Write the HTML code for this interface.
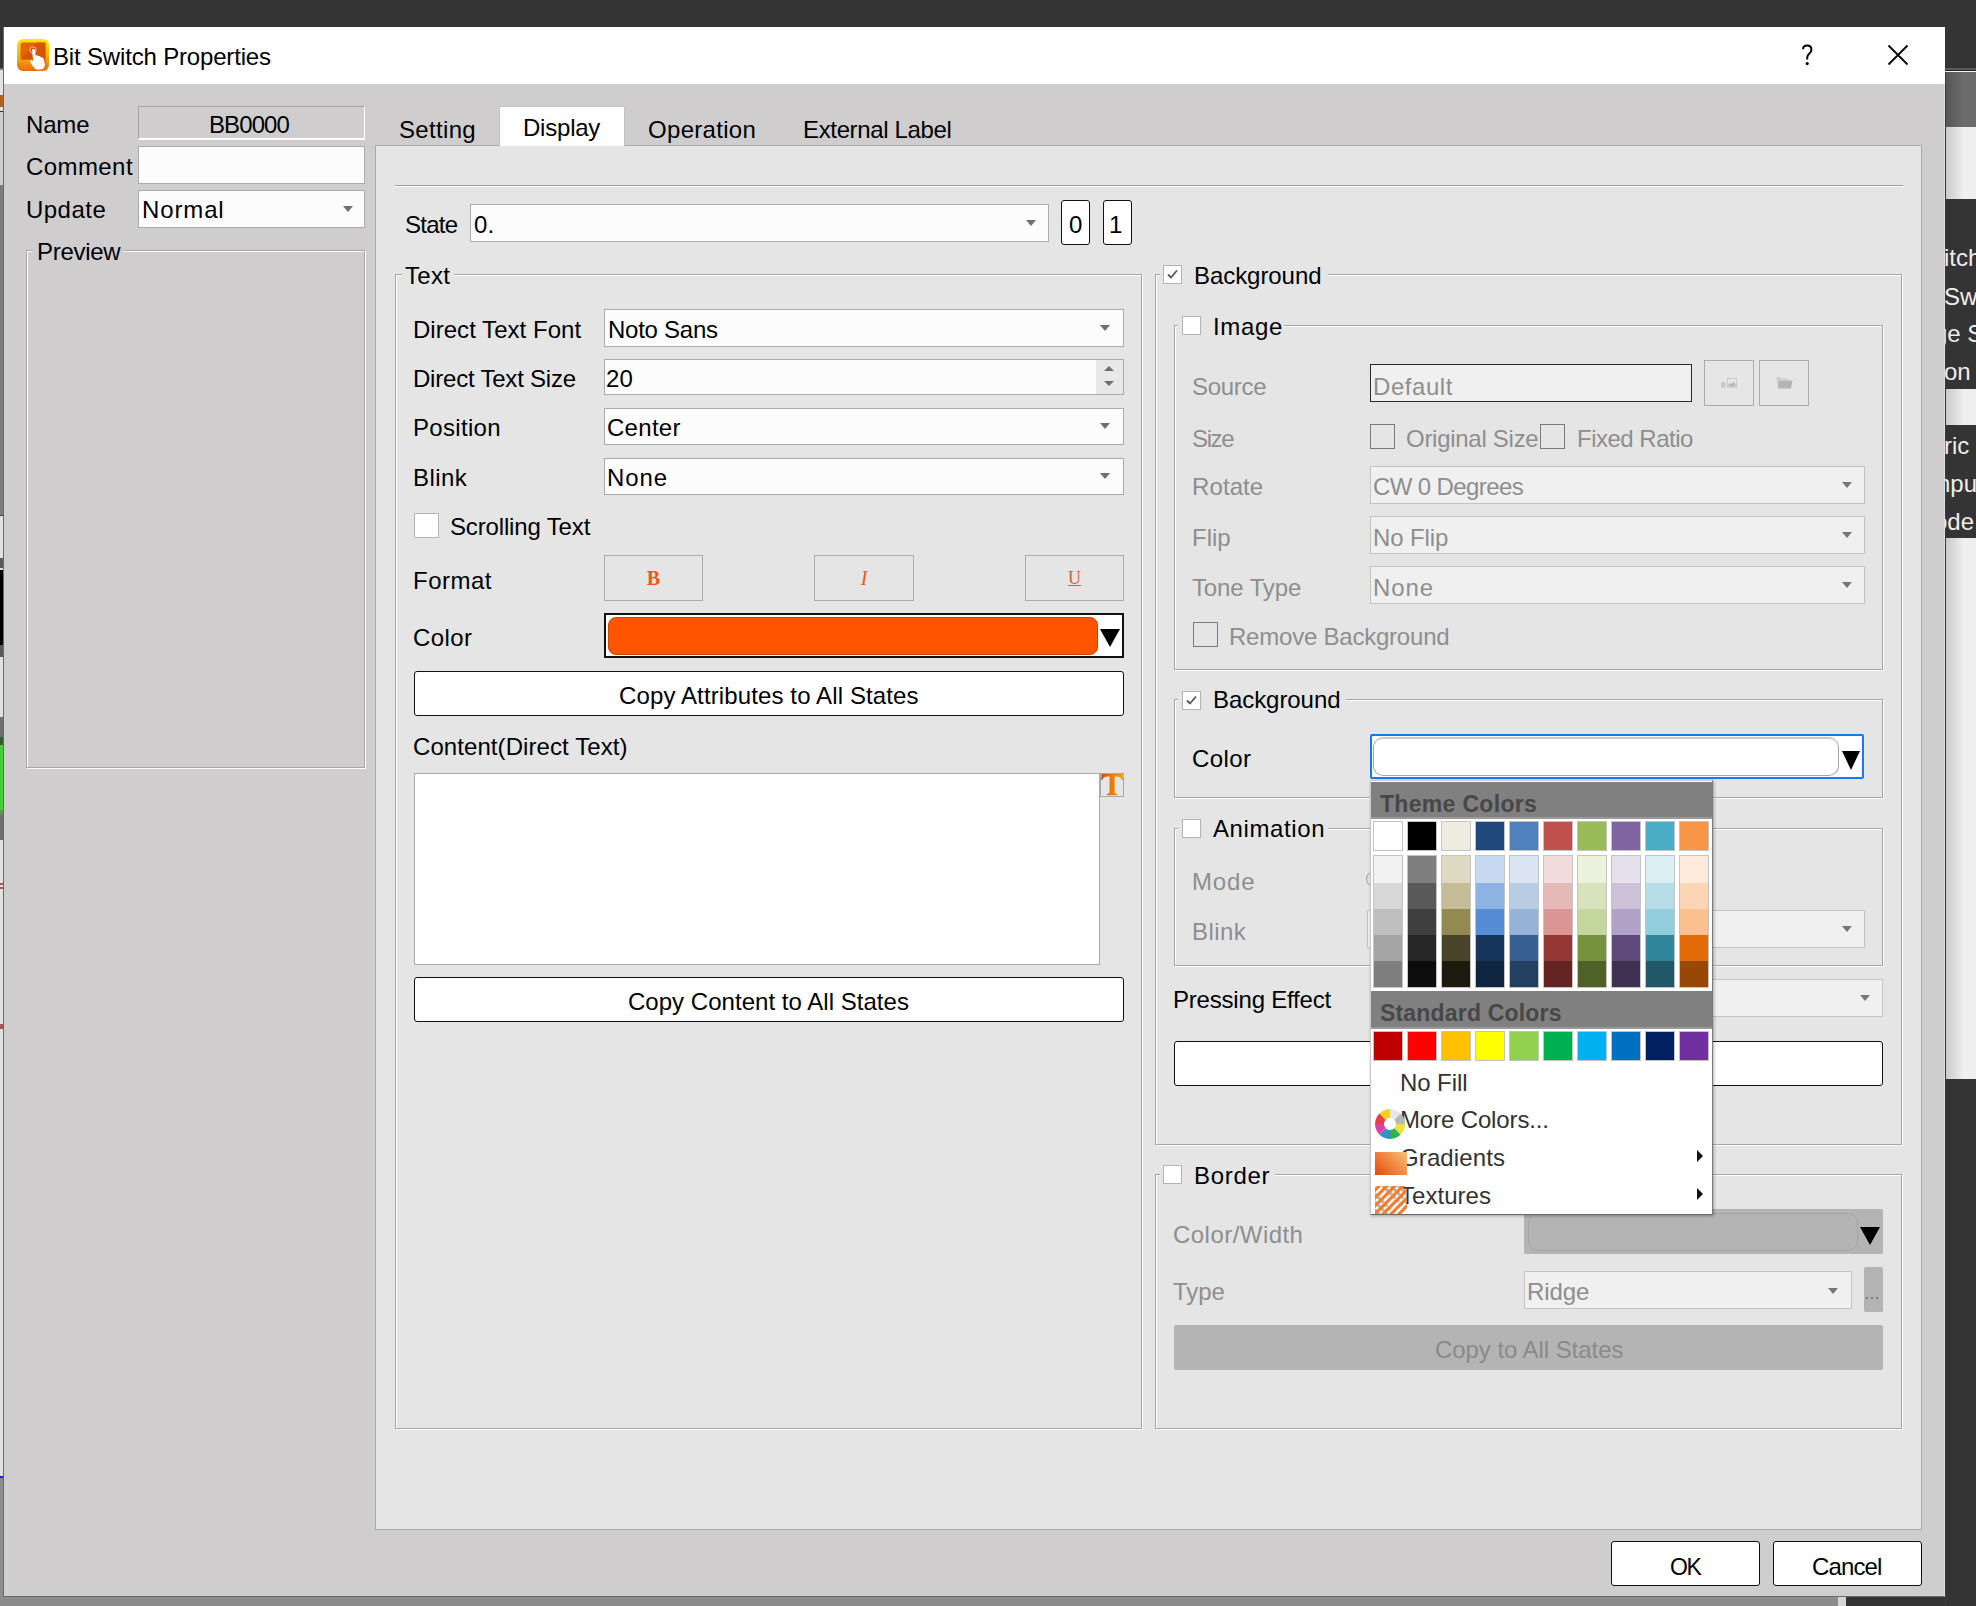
<!DOCTYPE html>
<html><head><meta charset="utf-8">
<style>
*{box-sizing:border-box}
html,body{margin:0;padding:0}
body{width:1976px;height:1606px;position:relative;overflow:hidden;background:#343434;font-family:"Liberation Sans",sans-serif;color:#000}
.a{position:absolute}
.t{position:absolute;font-size:24px;line-height:24px;white-space:nowrap}
.g{color:#8e8e8e}
.box{position:absolute;background:#fcfcfc;border:1px solid #ababab}
.dis{position:absolute;background:#f0f0f0;border:1px solid #c2c2c2}
.grp{position:absolute;border:1px solid #a6a6a6;box-shadow:1px 1px 0 #fff, inset 1px 1px 0 #fff}
.lbg{position:absolute;background:#e5e5e5;height:4px}
.cb{position:absolute;background:#fff;border:1px solid #b4b4b4}
.btn{position:absolute;background:#fff;border:1.5px solid #111;border-radius:3px}
.arr{position:absolute;width:0;height:0;border-left:5.5px solid transparent;border-right:5.5px solid transparent;border-top:6px solid #707070}
.sw{position:absolute;width:30px}
</style></head><body>
<!-- outer desktop bits -->
<div class="a" style="left:1945px;top:68px;width:31px;height:2px;background:#5a5a5a"></div>
<div class="a" style="left:1945px;top:70px;width:31px;height:1px;background:#222"></div>
<div class="a" style="left:1945px;top:71px;width:31px;height:1px;background:#f0f0f0"></div>
<div class="a" style="left:1945px;top:72px;width:31px;height:55px;background:linear-gradient(90deg,#555,#6b6b6b 60%)"></div>
<div class="a" style="left:1945px;top:127px;width:31px;height:72px;background:linear-gradient(90deg,#c8c8c8,#efefef 60%)"></div>
<div class="a" style="left:1945px;top:389px;width:31px;height:36px;background:linear-gradient(90deg,#c8c8c8,#efefef 60%)"></div>
<div class="a" style="left:1945px;top:538px;width:31px;height:541px;background:linear-gradient(90deg,#c8c8c8,#efefef 60%)"></div>
<div class="a" style="left:1945px;top:72px;width:1px;height:1534px;background:#3a3a3a"></div>
<div class="a" style="left:0;top:1597px;width:1838px;height:9px;background:#8c8c8c"></div>
<div class="a" style="left:1838px;top:1597px;width:8px;height:9px;background:#d6d6d6"></div>
<!-- left strip -->
<div class="a" style="left:0;top:68px;width:3px;height:1408px;background:#e2e2e2"></div>
<div class="a" style="left:0;top:68px;width:3px;height:2px;background:#777"></div>
<div class="a" style="left:0;top:95px;width:3px;height:12px;background:#b06020"></div>
<div class="a" style="left:0;top:111px;width:3px;height:1px;background:#333"></div>
<div class="a" style="left:0;top:112px;width:3px;height:73px;background:#cfcfcf"></div>
<div class="a" style="left:0;top:185px;width:3px;height:330px;background:#7c7c7c"></div>
<div class="a" style="left:0;top:515px;width:3px;height:1px;background:#2030e0"></div>
<div class="a" style="left:0;top:558px;width:3px;height:99px;background:#5a5a5a"></div>
<div class="a" style="left:0;top:568px;width:3px;height:2px;background:#ddd"></div>
<div class="a" style="left:0;top:570px;width:3px;height:75px;background:#000"></div>
<div class="a" style="left:0;top:717px;width:3px;height:123px;background:#6e6e6e"></div>
<div class="a" style="left:0;top:737px;width:3px;height:8px;background:#3a5a30"></div>
<div class="a" style="left:0;top:745px;width:3px;height:65px;background:#44d034"></div>
<div class="a" style="left:0;top:810px;width:3px;height:5px;background:#6a8a60"></div>
<div class="a" style="left:0;top:883px;width:3px;height:2px;background:#a05858"></div>
<div class="a" style="left:0;top:887px;width:3px;height:2px;background:#a05858"></div>
<div class="a" style="left:0;top:1024px;width:3px;height:5px;background:#a05858"></div>
<div class="a" style="left:0;top:1476px;width:3px;height:2px;background:#1020e0"></div>
<div class="a" style="left:0;top:1478px;width:3px;height:128px;background:#8c8c8c"></div>
<!-- dialog -->
<div class="a" style="left:3px;top:27px;width:1942px;height:1570px;background:#cfcdce;border:1px solid #6a6a6a;border-top:none;border-right:1px solid #dcdcdc"></div>
<div class="a" style="left:4px;top:27px;width:1941px;height:57px;background:#fff"></div>
<div id="titleicon" class="a" style="left:17px;top:39px;width:32px;height:32px">
<svg width="32" height="32" viewBox="0 0 32 32"><defs><linearGradient id="ig" x1="0" y1="0" x2="0" y2="1"><stop offset="0" stop-color="#ffe800"/><stop offset="0.55" stop-color="#f5b000"/><stop offset="1" stop-color="#ee6a10"/></linearGradient></defs>
<rect x="0" y="0" width="32" height="32" rx="6" fill="url(#ig)"/><rect x="3.5" y="3.5" width="25" height="17" rx="2" fill="#e3620a"/><path d="M3.5 20.5 L14 20.5 L20 28 L28.5 28 L28.5 3.5 L20 3.5 Z" fill="#d24e02" opacity="0.7"/>
<circle cx="16" cy="11" r="3.2" fill="none" stroke="#f7b89a" stroke-width="1"/>
<path d="M15 10.5 Q16.5 9.5 18 10.5 L18.6 16.5 Q20 16 21.2 17 Q22.8 16.8 23.8 18 Q25.5 18 26.5 19.5 L28 25.5 Q27.5 29.5 24.5 30.5 L19.5 30.5 Q17.5 29.5 16 27.5 L13 22.5 Q13.2 20.6 15 21 L16.2 22.6 Z" fill="#fff"/></svg></div>
<div class="t" style="left:53px;top:45px;letter-spacing:-0.17px">Bit Switch Properties</div>
<svg class="a" style="left:1800px;top:42px" width="16" height="26" viewBox="0 0 16 26"><path d="M3 7.3 Q3 3.6 7.2 3.6 Q11.4 3.6 11.4 7.4 Q11.4 10 9.2 11.8 Q7.2 13.4 7.2 15.6 L7.2 17.6" fill="none" stroke="#000" stroke-width="2"/><circle cx="7.2" cy="21.6" r="1.6" fill="#000"/></svg>
<svg class="a" style="left:1886px;top:43px" width="24" height="24" viewBox="0 0 24 24"><path d="M2.5 2.5 L21.5 21.5 M21.5 2.5 L2.5 21.5" stroke="#000" stroke-width="1.8"/></svg>

<!-- left panel -->
<div class="t" style="left:26px;top:113px;letter-spacing:-0.17px">Name</div>
<div class="a" style="left:138px;top:106px;width:227px;height:34px;border:1px solid #a2a2a2;border-right-color:#fff;border-bottom:2px solid #fff"></div>
<div class="t" style="left:209px;top:113px;letter-spacing:-0.90px">BB0000</div>
<div class="t" style="left:26px;top:155px;letter-spacing:0.42px">Comment</div>
<div class="box" style="left:138px;top:146px;width:227px;height:38px"></div>
<div class="t" style="left:26px;top:198px;letter-spacing:0.47px">Update</div>
<div class="box" style="left:138px;top:190px;width:227px;height:38px"></div>
<div class="t" style="left:142px;top:198px;letter-spacing:0.87px">Normal</div>
<div class="arr" style="left:343px;top:206px"></div>
<div class="a" style="left:26px;top:250px;width:339px;height:518px;border:1px solid #a6a6a6;box-shadow:1px 1px 0 #fff, inset 1px 1px 0 #fff"></div>
<div class="a" style="left:33px;top:246px;width:90px;height:8px;background:#cfcdce"></div>
<div class="t" style="left:37px;top:240px;letter-spacing:-0.28px">Preview</div>

<!-- tabs -->
<div class="a" style="left:375px;top:145px;width:1547px;height:1385px;background:#e5e5e5;border:1px solid #a9a9a9"></div>
<div class="a" style="left:499px;top:106px;width:126px;height:40px;background:#fff;border:1px solid #c4c4c4;border-bottom:none"></div>
<div class="t" style="left:399px;top:118px;letter-spacing:0.33px">Setting</div>
<div class="t" style="left:523px;top:116px;letter-spacing:-0.22px">Display</div>
<div class="t" style="left:648px;top:118px;letter-spacing:0.31px">Operation</div>
<div class="t" style="left:803px;top:118px;letter-spacing:-0.35px">External Label</div>

<div class="a" style="left:395px;top:185px;width:1508px;height:1px;background:#a0a0a0"></div>
<div class="a" style="left:395px;top:186px;width:1508px;height:1px;background:#fff"></div>

<div class="t" style="left:405px;top:213px;letter-spacing:-0.75px">State</div>
<div class="box" style="left:470px;top:204px;width:579px;height:38px"></div>
<div class="t" style="left:474px;top:213px;letter-spacing:0.23px">0.</div>
<div class="arr" style="left:1026px;top:220px"></div>
<div class="btn" style="left:1061px;top:200px;width:29px;height:45px"></div>
<div class="t" style="left:1069px;top:213px">0</div>
<div class="btn" style="left:1103px;top:200px;width:29px;height:45px"></div>
<div class="t" style="left:1109px;top:213px">1</div>

<!-- TEXT GROUP -->
<div class="grp" style="left:395px;top:274px;width:747px;height:1155px"></div>
<div class="lbg" style="left:402px;top:272px;width:52px"></div>
<div class="t" style="left:405px;top:264px;letter-spacing:0.29px">Text</div>

<div class="t" style="left:413px;top:318px;letter-spacing:0.03px">Direct Text Font</div>
<div class="box" style="left:604px;top:309px;width:520px;height:38px"></div>
<div class="t" style="left:608px;top:318px;letter-spacing:-0.26px">Noto Sans</div>
<div class="arr" style="left:1100px;top:325px"></div>

<div class="t" style="left:413px;top:367px;letter-spacing:-0.21px">Direct Text Size</div>
<div class="box" style="left:604px;top:359px;width:520px;height:36px"></div>
<div class="a" style="left:1096px;top:360px;width:27px;height:34px;background:#e8e8e8"></div>
<div class="arr" style="left:1104px;top:381px;border-width:5px 5px 0 5px;border-top-color:#6e6e6e"></div>
<div class="a" style="left:1104px;top:366px;width:0;height:0;border-left:5px solid transparent;border-right:5px solid transparent;border-bottom:5px solid #6e6e6e"></div>
<div class="t" style="left:606px;top:367px;letter-spacing:0.13px">20</div>

<div class="t" style="left:413px;top:416px;letter-spacing:0.32px">Position</div>
<div class="box" style="left:604px;top:408px;width:520px;height:37px"></div>
<div class="t" style="left:607px;top:416px;letter-spacing:0.29px">Center</div>
<div class="arr" style="left:1100px;top:423px"></div>

<div class="t" style="left:413px;top:466px;letter-spacing:0.43px">Blink</div>
<div class="box" style="left:604px;top:458px;width:520px;height:37px"></div>
<div class="t" style="left:607px;top:466px;letter-spacing:0.88px">None</div>
<div class="arr" style="left:1100px;top:473px"></div>

<div class="cb" style="left:414px;top:513px;width:25px;height:25px"></div>
<div class="t" style="left:450px;top:515px;letter-spacing:-0.15px">Scrolling Text</div>

<div class="t" style="left:413px;top:569px;letter-spacing:0.48px">Format</div>
<div class="a" style="left:604px;top:555px;width:99px;height:46px;border:1px solid #ababab"></div>
<div class="a" style="left:814px;top:555px;width:100px;height:46px;border:1px solid #ababab"></div>
<div class="a" style="left:1025px;top:555px;width:99px;height:46px;border:1px solid #ababab"></div>
<div class="a" style="left:604px;top:566px;width:99px;text-align:center;font:bold 20px/24px 'Liberation Serif';color:#e8591a">B</div>
<div class="a" style="left:814px;top:566px;width:100px;text-align:center;font:italic 20px/24px 'Liberation Serif';color:#e8591a">I</div>
<div class="a" style="left:1025px;top:566px;width:99px;text-align:center;font:18px/24px 'Liberation Serif';color:#e8591a;text-decoration:underline">U</div>

<div class="t" style="left:413px;top:626px;letter-spacing:0.42px">Color</div>
<div class="a" style="left:604px;top:613px;width:520px;height:45px;background:#fff;border:2px solid #111"></div>
<div class="a" style="left:608px;top:617px;width:490px;height:38px;background:#ff5500;border-radius:8px;border:1px solid #d04500"></div>
<div class="a" style="left:1100px;top:629px;width:0;height:0;border-left:10px solid transparent;border-right:10px solid transparent;border-top:18px solid #000"></div>

<div class="btn" style="left:414px;top:671px;width:710px;height:45px"></div>
<div class="t" style="left:619px;top:684px;letter-spacing:0.12px">Copy Attributes to All States</div>

<div class="t" style="left:413px;top:735px;letter-spacing:0.08px">Content(Direct Text)</div>
<div class="a" style="left:414px;top:773px;width:686px;height:192px;background:#fff;border:1px solid #ababab"></div>
<div class="a" style="left:1100px;top:773px;width:24px;height:24px;border:1px solid #a8a8a8"></div>
<svg class="a" style="left:1100px;top:773px" width="24" height="24" viewBox="0 0 24 24"><defs><linearGradient id="tg" x1="0" y1="0" x2="1" y2="0"><stop offset="0" stop-color="#e84800"/><stop offset="0.5" stop-color="#f07a00"/><stop offset="1" stop-color="#f5a000"/></linearGradient></defs><path d="M2.5 1 L21.5 1 L22.5 1 L23 7 L22 7 Q20.5 3.6 16.5 3.6 L14.6 3.6 L14.6 19.2 Q14.8 20.8 17.2 21 L17.2 22.2 L7 22.2 L7 21 Q9.4 20.8 9.6 19.2 L9.6 3.6 L7.5 3.6 Q3.5 3.6 2 7 L1 7 L1.5 1 Z" fill="url(#tg)"/></svg>

<div class="btn" style="left:414px;top:977px;width:710px;height:45px"></div>
<div class="t" style="left:628px;top:990px;letter-spacing:0.03px">Copy Content to All States</div>

<!-- BACKGROUND GROUP -->
<div class="grp" style="left:1155px;top:274px;width:747px;height:871px"></div>
<div class="lbg" style="left:1160px;top:272px;width:168px"></div>
<div class="cb" style="left:1163px;top:265px;width:19px;height:19px"></div>
<svg class="a" style="left:1165px;top:267px" width="15" height="15" viewBox="0 0 15 15"><path d="M3 7.5 L6 10.5 L12 3.5" fill="none" stroke="#555" stroke-width="1.8"/></svg>
<div class="t" style="left:1194px;top:264px;letter-spacing:-0.06px">Background</div>

<!-- image group -->
<div class="grp" style="left:1174px;top:325px;width:709px;height:345px"></div>
<div class="lbg" style="left:1178px;top:323px;width:106px"></div>
<div class="cb" style="left:1182px;top:316px;width:19px;height:19px"></div>
<div class="t" style="left:1213px;top:315px;letter-spacing:0.63px">Image</div>

<div class="t g" style="left:1192px;top:375px;letter-spacing:-0.31px">Source</div>
<div class="a" style="left:1370px;top:364px;width:322px;height:38px;background:#f0f0f0;border:1px solid #2a2a2a"></div>
<div class="t g" style="left:1373px;top:375px;letter-spacing:0.56px">Default</div>
<div class="a" style="left:1704px;top:360px;width:50px;height:46px;background:#e6e6e6;border:1px solid #ababab"></div>
<div class="a" style="left:1759px;top:360px;width:50px;height:46px;background:#e6e6e6;border:1px solid #ababab"></div>
<svg class="a" style="left:1720px;top:377px" width="18" height="12" viewBox="0 0 18 12"><rect x="1" y="5" width="4.5" height="5.5" rx="1.2" fill="#c8c8c8"/><rect x="7.5" y="1.5" width="9" height="9" fill="none" stroke="#c6c6c6" stroke-width="0.9"/><path d="M8.5 9.5 L8.5 7 L10.5 6 L12 7 L13.5 4.5 L15.5 7 L15.5 9.5 Z" fill="#b8b8b8"/></svg>
<svg class="a" style="left:1775px;top:376px" width="19" height="14" viewBox="0 0 19 14"><path d="M1 1 L5.5 1 L6.5 2.5 L13 2.5 L13 4 L3.5 4 L3 11 Z" fill="#cfcfcf"/><path d="M3.5 4.5 L17.5 4.5 L16 12.5 L3 12.5 Z" fill="#b4b4b4"/></svg>

<div class="t g" style="left:1192px;top:427px;letter-spacing:-1.37px">Size</div>
<div class="cb" style="left:1370px;top:424px;width:25px;height:25px;background:transparent;border-color:#7a7a7a"></div>
<div class="t g" style="left:1406px;top:427px;letter-spacing:-0.28px">Original Size</div>
<div class="cb" style="left:1540px;top:424px;width:25px;height:25px;background:transparent;border-color:#7a7a7a"></div>
<div class="t g" style="left:1577px;top:427px;letter-spacing:-0.50px">Fixed Ratio</div>

<div class="t g" style="left:1192px;top:475px;letter-spacing:0.10px">Rotate</div>
<div class="dis" style="left:1370px;top:466px;width:495px;height:38px"></div>
<div class="t g" style="left:1373px;top:475px;letter-spacing:-0.61px">CW 0 Degrees</div>
<div class="arr" style="left:1842px;top:482px;border-top-color:#777"></div>

<div class="t g" style="left:1192px;top:526px;letter-spacing:-0.02px">Flip</div>
<div class="dis" style="left:1370px;top:516px;width:495px;height:38px"></div>
<div class="t g" style="left:1373px;top:526px;letter-spacing:-0.10px">No Flip</div>
<div class="arr" style="left:1842px;top:532px;border-top-color:#777"></div>

<div class="t g" style="left:1192px;top:576px;letter-spacing:-0.13px">Tone Type</div>
<div class="dis" style="left:1370px;top:566px;width:495px;height:38px"></div>
<div class="t g" style="left:1373px;top:576px;letter-spacing:0.88px">None</div>
<div class="arr" style="left:1842px;top:582px;border-top-color:#777"></div>

<div class="cb" style="left:1193px;top:622px;width:25px;height:25px;background:transparent;border-color:#7a7a7a"></div>
<div class="t g" style="left:1229px;top:625px;letter-spacing:-0.22px">Remove Background</div>

<!-- background color group -->
<div class="grp" style="left:1174px;top:699px;width:709px;height:99px"></div>
<div class="lbg" style="left:1178px;top:697px;width:168px"></div>
<div class="cb" style="left:1182px;top:691px;width:19px;height:19px"></div>
<svg class="a" style="left:1184px;top:693px" width="15" height="15" viewBox="0 0 15 15"><path d="M3 7.5 L6 10.5 L12 3.5" fill="none" stroke="#555" stroke-width="1.8"/></svg>
<div class="t" style="left:1213px;top:688px;letter-spacing:-0.06px">Background</div>
<div class="t" style="left:1192px;top:747px;letter-spacing:0.42px">Color</div>
<div class="a" style="left:1370px;top:734px;width:494px;height:45px;background:#fff;border:2px solid #0f7cf5;border-radius:2px"></div>
<div class="a" style="left:1373px;top:737px;width:466px;height:39px;background:#fff;border-radius:10px;border:1px solid #a8a8a8;border-top:2px solid #c8c8c8"></div>
<div class="a" style="left:1842px;top:751px;width:0;height:0;border-left:9.5px solid transparent;border-right:9.5px solid transparent;border-top:19px solid #000"></div>

<!-- animation group -->
<div class="grp" style="left:1174px;top:828px;width:709px;height:138px"></div>
<div class="lbg" style="left:1178px;top:826px;width:150px"></div>
<div class="cb" style="left:1182px;top:819px;width:19px;height:19px"></div>
<div class="t" style="left:1213px;top:817px;letter-spacing:0.61px">Animation</div>
<div class="t g" style="left:1192px;top:870px;letter-spacing:0.87px">Mode</div>
<div class="a" style="left:1366px;top:871px;width:16px;height:16px;border:1px solid #9a9a9a;border-radius:50%"></div>
<div class="t g" style="left:1192px;top:920px;letter-spacing:0.43px">Blink</div>
<div class="dis" style="left:1367px;top:910px;width:498px;height:38px"></div>
<div class="arr" style="left:1842px;top:926px;border-top-color:#777"></div>

<div class="t" style="left:1173px;top:988px;letter-spacing:-0.20px">Pressing Effect</div>
<div class="box" style="left:1370px;top:979px;width:513px;height:38px;background:#f0f0f0;border-color:#c4c4c4"></div>
<div class="arr" style="left:1860px;top:995px;border-top-color:#777"></div>
<div class="btn" style="left:1174px;top:1041px;width:709px;height:45px"></div>

<!-- border group -->
<div class="grp" style="left:1155px;top:1174px;width:747px;height:255px"></div>
<div class="lbg" style="left:1160px;top:1172px;width:115px"></div>
<div class="cb" style="left:1163px;top:1165px;width:19px;height:19px"></div>
<div class="t" style="left:1194px;top:1164px;letter-spacing:0.68px">Border</div>
<div class="t g" style="left:1173px;top:1223px;letter-spacing:0.46px">Color/Width</div>
<div class="a" style="left:1524px;top:1209px;width:359px;height:45px;background:#b4b4b4;border-radius:2px"></div>
<div class="a" style="left:1528px;top:1213px;width:330px;height:38px;border-radius:10px;border:1px solid #a4a4a4"></div>
<div class="a" style="left:1860px;top:1227px;width:0;height:0;border-left:10px solid transparent;border-right:10px solid transparent;border-top:18px solid #000"></div>
<div class="t g" style="left:1173px;top:1280px;letter-spacing:-0.08px">Type</div>
<div class="dis" style="left:1524px;top:1271px;width:328px;height:38px"></div>
<div class="t g" style="left:1527px;top:1280px;letter-spacing:-0.10px">Ridge</div>
<div class="arr" style="left:1828px;top:1288px;border-top-color:#777"></div>
<div class="a" style="left:1864px;top:1267px;width:19px;height:45px;background:#b4b4b4;border-radius:2px"></div>
<div class="a" style="left:1866px;top:1297px;width:2px;height:2px;background:#7a7a7a"></div><div class="a" style="left:1871px;top:1297px;width:2px;height:2px;background:#7a7a7a"></div><div class="a" style="left:1876px;top:1297px;width:2px;height:2px;background:#7a7a7a"></div>
<div class="a" style="left:1174px;top:1325px;width:709px;height:45px;background:#b4b4b4;border-radius:2px"></div>
<div class="t" style="left:1435px;top:1338px;color:#8a8a8a;letter-spacing:-0.06px">Copy to All States</div>

<!-- OK Cancel -->
<div class="btn" style="left:1611px;top:1541px;width:149px;height:45px"></div>
<div class="t" style="left:1670px;top:1555px;font-size:23px;letter-spacing:-1.50px">OK</div>
<div class="btn" style="left:1773px;top:1541px;width:149px;height:45px"></div>
<div class="t" style="left:1812px;top:1555px;letter-spacing:-0.88px">Cancel</div>

<!-- right strip text -->
<div class="a" style="left:1945px;top:199px;width:31px;height:340px;overflow:hidden">
<div class="t" style="left:-1px;top:47px;color:#eee">itch</div>
<div class="t" style="left:-1px;top:86px;color:#eee">Switch</div>
<div class="t" style="left:-11px;top:123px;color:#eee">ge S</div>
<div class="t" style="left:-1px;top:161px;color:#eee">on</div>
<div class="t" style="left:-1px;top:235px;color:#eee">ric</div>
<div class="t" style="left:-8px;top:273px;color:#eee">npu</div>
<div class="t" style="left:-11px;top:311px;color:#eee">ode</div>
</div>
<!-- COLOR POPUP -->
<div id="popup" class="a" style="left:1370px;top:780px;width:343px;height:435px;background:#fff;border:1px solid #c8c8c8;border-right-color:#7a7a7a;border-bottom-color:#6a6a6a;box-shadow:1px 1px 3px rgba(0,0,0,0.3)">
<div class="a" style="left:0px;top:1px;width:341px;height:37px;background:#808080;border-bottom:2px solid #9a9a9a"></div>
<div class="t" style="left:9px;top:11px;font-weight:bold;font-size:23px;color:#474747;letter-spacing:0.32px">Theme Colors</div>
<div class="a" style="left:2px;top:40px;width:30px;height:30px;background:#FFFFFF;border:1px solid #c4c4c4"></div>
<div class="a" style="left:36px;top:40px;width:30px;height:30px;background:#000000;border:1px solid #c4c4c4"></div>
<div class="a" style="left:70px;top:40px;width:30px;height:30px;background:#EEECE1;border:1px solid #c4c4c4"></div>
<div class="a" style="left:104px;top:40px;width:30px;height:30px;background:#1F497D;border:1px solid #c4c4c4"></div>
<div class="a" style="left:138px;top:40px;width:30px;height:30px;background:#4F81BD;border:1px solid #c4c4c4"></div>
<div class="a" style="left:172px;top:40px;width:30px;height:30px;background:#C0504D;border:1px solid #c4c4c4"></div>
<div class="a" style="left:206px;top:40px;width:30px;height:30px;background:#9BBB59;border:1px solid #c4c4c4"></div>
<div class="a" style="left:240px;top:40px;width:30px;height:30px;background:#8064A2;border:1px solid #c4c4c4"></div>
<div class="a" style="left:274px;top:40px;width:30px;height:30px;background:#4BACC6;border:1px solid #c4c4c4"></div>
<div class="a" style="left:308px;top:40px;width:30px;height:30px;background:#F79646;border:1px solid #c4c4c4"></div>
<div class="a" style="left:2px;top:74px;width:30px;height:133px;background:#fff;border:1px solid #c4c4c4"></div>
<div class="a" style="left:3px;top:75px;width:28px;height:27px;background:#F2F2F2"></div>
<div class="a" style="left:3px;top:102px;width:28px;height:26px;background:#D8D8D8"></div>
<div class="a" style="left:3px;top:128px;width:28px;height:26px;background:#BFBFBF"></div>
<div class="a" style="left:3px;top:154px;width:28px;height:26px;background:#A5A5A5"></div>
<div class="a" style="left:3px;top:180px;width:28px;height:26px;background:#7F7F7F"></div>
<div class="a" style="left:36px;top:74px;width:30px;height:133px;background:#fff;border:1px solid #c4c4c4"></div>
<div class="a" style="left:37px;top:75px;width:28px;height:27px;background:#7F7F7F"></div>
<div class="a" style="left:37px;top:102px;width:28px;height:26px;background:#595959"></div>
<div class="a" style="left:37px;top:128px;width:28px;height:26px;background:#3F3F3F"></div>
<div class="a" style="left:37px;top:154px;width:28px;height:26px;background:#262626"></div>
<div class="a" style="left:37px;top:180px;width:28px;height:26px;background:#0C0C0C"></div>
<div class="a" style="left:70px;top:74px;width:30px;height:133px;background:#fff;border:1px solid #c4c4c4"></div>
<div class="a" style="left:71px;top:75px;width:28px;height:27px;background:#DDD9C3"></div>
<div class="a" style="left:71px;top:102px;width:28px;height:26px;background:#C4BD97"></div>
<div class="a" style="left:71px;top:128px;width:28px;height:26px;background:#938953"></div>
<div class="a" style="left:71px;top:154px;width:28px;height:26px;background:#494429"></div>
<div class="a" style="left:71px;top:180px;width:28px;height:26px;background:#1D1B10"></div>
<div class="a" style="left:104px;top:74px;width:30px;height:133px;background:#fff;border:1px solid #c4c4c4"></div>
<div class="a" style="left:105px;top:75px;width:28px;height:27px;background:#C6D9F0"></div>
<div class="a" style="left:105px;top:102px;width:28px;height:26px;background:#8DB3E2"></div>
<div class="a" style="left:105px;top:128px;width:28px;height:26px;background:#548DD4"></div>
<div class="a" style="left:105px;top:154px;width:28px;height:26px;background:#17365D"></div>
<div class="a" style="left:105px;top:180px;width:28px;height:26px;background:#0F243E"></div>
<div class="a" style="left:138px;top:74px;width:30px;height:133px;background:#fff;border:1px solid #c4c4c4"></div>
<div class="a" style="left:139px;top:75px;width:28px;height:27px;background:#DBE5F1"></div>
<div class="a" style="left:139px;top:102px;width:28px;height:26px;background:#B8CCE4"></div>
<div class="a" style="left:139px;top:128px;width:28px;height:26px;background:#95B3D7"></div>
<div class="a" style="left:139px;top:154px;width:28px;height:26px;background:#366092"></div>
<div class="a" style="left:139px;top:180px;width:28px;height:26px;background:#244061"></div>
<div class="a" style="left:172px;top:74px;width:30px;height:133px;background:#fff;border:1px solid #c4c4c4"></div>
<div class="a" style="left:173px;top:75px;width:28px;height:27px;background:#F2DCDB"></div>
<div class="a" style="left:173px;top:102px;width:28px;height:26px;background:#E5B9B7"></div>
<div class="a" style="left:173px;top:128px;width:28px;height:26px;background:#D99694"></div>
<div class="a" style="left:173px;top:154px;width:28px;height:26px;background:#953734"></div>
<div class="a" style="left:173px;top:180px;width:28px;height:26px;background:#632423"></div>
<div class="a" style="left:206px;top:74px;width:30px;height:133px;background:#fff;border:1px solid #c4c4c4"></div>
<div class="a" style="left:207px;top:75px;width:28px;height:27px;background:#EBF1DD"></div>
<div class="a" style="left:207px;top:102px;width:28px;height:26px;background:#D7E3BC"></div>
<div class="a" style="left:207px;top:128px;width:28px;height:26px;background:#C3D69B"></div>
<div class="a" style="left:207px;top:154px;width:28px;height:26px;background:#76923C"></div>
<div class="a" style="left:207px;top:180px;width:28px;height:26px;background:#4F6128"></div>
<div class="a" style="left:240px;top:74px;width:30px;height:133px;background:#fff;border:1px solid #c4c4c4"></div>
<div class="a" style="left:241px;top:75px;width:28px;height:27px;background:#E5E0EC"></div>
<div class="a" style="left:241px;top:102px;width:28px;height:26px;background:#CCC1D9"></div>
<div class="a" style="left:241px;top:128px;width:28px;height:26px;background:#B2A2C7"></div>
<div class="a" style="left:241px;top:154px;width:28px;height:26px;background:#5F497A"></div>
<div class="a" style="left:241px;top:180px;width:28px;height:26px;background:#3F3151"></div>
<div class="a" style="left:274px;top:74px;width:30px;height:133px;background:#fff;border:1px solid #c4c4c4"></div>
<div class="a" style="left:275px;top:75px;width:28px;height:27px;background:#DBEEF3"></div>
<div class="a" style="left:275px;top:102px;width:28px;height:26px;background:#B7DDE8"></div>
<div class="a" style="left:275px;top:128px;width:28px;height:26px;background:#92CDDC"></div>
<div class="a" style="left:275px;top:154px;width:28px;height:26px;background:#31859B"></div>
<div class="a" style="left:275px;top:180px;width:28px;height:26px;background:#205867"></div>
<div class="a" style="left:308px;top:74px;width:30px;height:133px;background:#fff;border:1px solid #c4c4c4"></div>
<div class="a" style="left:309px;top:75px;width:28px;height:27px;background:#FDEADA"></div>
<div class="a" style="left:309px;top:102px;width:28px;height:26px;background:#FBD5B5"></div>
<div class="a" style="left:309px;top:128px;width:28px;height:26px;background:#FAC08F"></div>
<div class="a" style="left:309px;top:154px;width:28px;height:26px;background:#E36C09"></div>
<div class="a" style="left:309px;top:180px;width:28px;height:26px;background:#974806"></div>
<div class="a" style="left:0px;top:210px;width:341px;height:38px;background:#808080;border-bottom:2px solid #9a9a9a"></div>
<div class="t" style="left:9px;top:220px;font-weight:bold;font-size:23px;color:#474747;letter-spacing:0.18px">Standard Colors</div>
<div class="a" style="left:2px;top:250px;width:30px;height:30px;background:#C00000;border:1px solid #c4c4c4"></div>
<div class="a" style="left:36px;top:250px;width:30px;height:30px;background:#FF0000;border:1px solid #c4c4c4"></div>
<div class="a" style="left:70px;top:250px;width:30px;height:30px;background:#FFC000;border:1px solid #c4c4c4"></div>
<div class="a" style="left:104px;top:250px;width:30px;height:30px;background:#FFFF00;border:1px solid #c4c4c4"></div>
<div class="a" style="left:138px;top:250px;width:30px;height:30px;background:#92D050;border:1px solid #c4c4c4"></div>
<div class="a" style="left:172px;top:250px;width:30px;height:30px;background:#00B050;border:1px solid #c4c4c4"></div>
<div class="a" style="left:206px;top:250px;width:30px;height:30px;background:#00B0F0;border:1px solid #c4c4c4"></div>
<div class="a" style="left:240px;top:250px;width:30px;height:30px;background:#0070C0;border:1px solid #c4c4c4"></div>
<div class="a" style="left:274px;top:250px;width:30px;height:30px;background:#002060;border:1px solid #c4c4c4"></div>
<div class="a" style="left:308px;top:250px;width:30px;height:30px;background:#7030A0;border:1px solid #c4c4c4"></div>
<div class="t" style="left:29px;top:290px;color:#333;;letter-spacing:-0.08px">No Fill</div>
<div class="t" style="left:29px;top:327px;color:#333;;letter-spacing:-0.13px">More Colors...</div>
<div class="t" style="left:29px;top:365px;color:#333;;letter-spacing:0.12px">Gradients</div>
<div class="t" style="left:29px;top:403px;color:#333;;letter-spacing:0.03px">Textures</div>
<svg class="a" style="left:3px;top:328px" width="34" height="30" viewBox="0 0 34 30">
<defs><clipPath id="rc"><path d="M16 0 A15 15 0 1 0 16.01 0 Z M16 9 A6 6 0 1 1 15.99 9 Z" clip-rule="evenodd"/></clipPath></defs>
<g clip-path="url(#rc)"><path d="M16 15 L16 -5 L36 -5 Z" fill="#e8e8e8"/><path d="M16 15 L36 -5 L36 15 Z" fill="#b8b8c0"/><path d="M16 15 L36 15 L36 35 Z" fill="#f0e040"/><path d="M16 15 L36 35 L16 35 Z" fill="#30b050"/><path d="M16 15 L16 35 L-4 35 Z" fill="#3090d0"/><path d="M16 15 L-4 35 L-4 15 Z" fill="#e040a0"/><path d="M16 15 L-4 15 L-4 -5 Z" fill="#e84040"/><path d="M16 15 L-4 -5 L16 -5 Z" fill="#f8d020"/></g></svg>
<div class="a" style="left:4px;top:371px;width:32px;height:23px;background:linear-gradient(45deg,#e84808,#f7c27a)"></div>
<svg class="a" style="left:4px;top:405px" width="32" height="28" viewBox="0 0 32 28">
<defs><clipPath id="tc"><rect width="32" height="28"/></clipPath></defs><g clip-path="url(#tc)" stroke-width="3.2">
<path d="M-4 4 L28 36 M4 -4 L36 28 M12 -4 L36 20 M20 -4 L36 12 M-4 12 L20 36 M-4 20 L12 36" stroke="#a8b8c4" stroke-dasharray="3 2"/>
<path d="M-4 8 L8 -4 M-4 16 L16 -4 M-4 24 L24 -4 M-4 32 L32 -4 M4 32 L36 0 M12 32 L36 8 M20 32 L36 16" stroke="#f08030"/></g></svg>
<div class="a" style="left:326px;top:369px;width:0;height:0;border-top:6px solid transparent;border-bottom:6px solid transparent;border-left:6px solid #111"></div>
<div class="a" style="left:326px;top:407px;width:0;height:0;border-top:6px solid transparent;border-bottom:6px solid transparent;border-left:6px solid #111"></div>

</div>
</body></html>
